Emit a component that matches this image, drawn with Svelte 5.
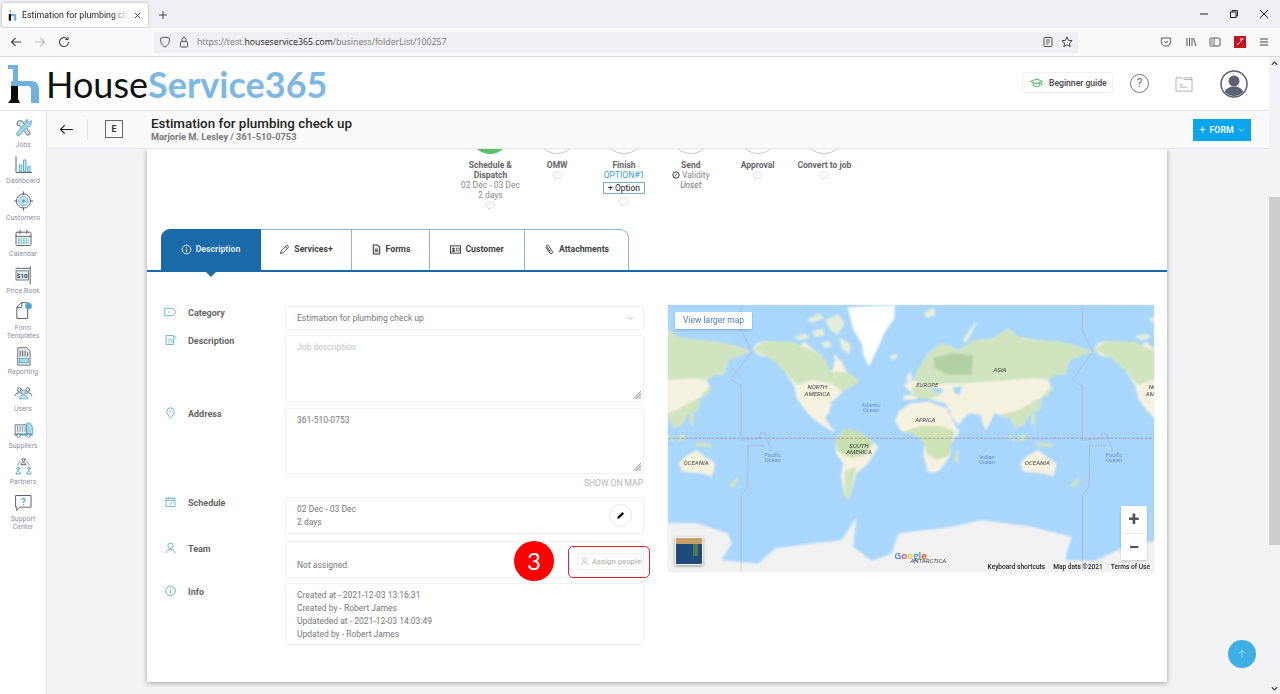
<script>
  const tl = '#4fa8c6';
  const gr = '#5b6470';
  const s = (c, w = 1.2) => `fill="none" stroke="${c}" stroke-width="${w}" stroke-linejoin="round" stroke-linecap="round"`;

  const nav = [
    { label: ['Jobs'], icon: `<path d="M4 6 8 3l3 1 9 15-3 2L7 9 5 9z" fill="#dfe3e6" stroke="${gr}" stroke-width="1.1"/><path d="M21 3l-3 3-2-1 1-3c-3 0-4 3-3 5L4 18c-1 2 1 4 3 3L17 10c2 1 5-1 4-7z" fill="#a8d8e6" stroke="${tl}" stroke-width="1.1"/>` },
    { label: ['Dashboard'], icon: `<path d="M3 2v19h19" ${s(gr)}/><path d="M7 12h3v8H7zM12 6h3v14h-3zM17 14h3v6h-3z" fill="#cfe9f2" stroke="${tl}" stroke-width="1.1"/>` },
    { label: ['Customers'], icon: `<circle cx="12" cy="12" r="8.5" ${s(gr)}/><circle cx="12" cy="12" r="5.5" fill="#cfe9f2" stroke="${tl}"/><circle cx="12" cy="12" r="2" fill="${tl}"/><path d="M12 1v3M12 20v3M1 12h3M20 12h3" ${s(gr)}/>` },
    { label: ['Calendar'], icon: `<rect x="3" y="5" width="18" height="16" rx="1.5" ${s(gr)}/><path d="M3 10h18M8 2.5v4M16 2.5v4" ${s(gr)}/><path d="M5.5 13h13M5.5 15.5h13M5.5 18h13" stroke="${tl}" stroke-width="1.6" stroke-dasharray="2 1"/>` },
    { label: ['Price Book'], icon: `<path d="M20 2v21M3 4h17" ${s(gr)}/><rect x="3" y="7" width="15" height="11" fill="#dff1f7" stroke="${gr}"/><text x="10.5" y="15.5" font-size="7.5" font-weight="700" text-anchor="middle" font-family="Roboto" fill="#333">$10</text>` },
    { label: ['Form', 'Templates'], icon: `<path d="M10 2h7v19H4V8z" ${s(gr)}/><path d="M10 2v6H4" ${s(gr)}/><circle cx="18" cy="6" r="4" fill="${tl}"/>` },
    { label: ['Reporting'], icon: `<path d="M5 2h11l4 4v17H5z" fill="#e7e8ea" stroke="${gr}"/><path d="M8 6v6M11 6v6M14 6v6M17 8v4" ${s(gr)}/><rect x="7" y="15" width="11" height="5" fill="#a8d8e6" stroke="${tl}"/>` },
    { label: ['Users'], icon: `<circle cx="7" cy="8" r="2.2" ${s(gr)}/><circle cx="17" cy="8" r="2.2" ${s(gr)}/><circle cx="12" cy="11" r="2.4" fill="#cfe9f2" stroke="${tl}"/><path d="M2 15c0-4 7-4 8-2M14 13c1-2 8-2 8 2" ${s(gr)}/><path d="M7 19c0-6 10-6 10 0z" fill="#cfe9f2" stroke="${tl}"/>` },
    { label: ['Suppliers'], icon: `<path d="M2 7h14v11H2z" fill="#e7f3f7" stroke="${gr}"/><path d="M5 9v6M8 9v6M11 9v6M14 9v6" ${s(gr, .8)}/><path d="M16 5h4l3 5v8h-7z" fill="#a8d8e6" stroke="${tl}"/><path d="M1 19h22" stroke="${tl}" stroke-width="2"/><circle cx="6" cy="20" r="2" fill="#fff" stroke="${gr}"/><circle cx="18" cy="20" r="2" fill="#fff" stroke="${gr}"/>` },
    { label: ['Partners'], icon: `<circle cx="12" cy="4.5" r="1.8" ${s(gr)}/><path d="M9 10c0-3 6-3 6 0z" ${s(gr)}/><path d="M5 11c1-3 2-3 3-4M19 11c-1-3-2-3-3-4" ${s(gr, .9)}/><circle cx="5.5" cy="15" r="1.6" ${s(tl)}/><path d="M3 21c0-4 5-4 5 0z" ${s(tl)}/><circle cx="18.5" cy="15" r="1.6" ${s(tl)}/><path d="M16 21c0-4 5-4 5 0z" ${s(tl)}/>` },
    { label: ['Support', 'Center'], icon: `<path d="M3 3h18v14H8l-4 4v-4H3z" ${s(gr)}/><text x="12" y="14.5" font-size="11" font-weight="700" text-anchor="middle" font-family="Roboto" fill="${tl}">?</text>` }
  ];

  const tabs = [
    { name: 'Description', width: 100, active: true, icon: `<circle cx="12" cy="12" r="9.5" fill="none" stroke="#fff" stroke-width="2"/><path d="M12 11v6M12 7v2" stroke="#fff" stroke-width="2.4"/>` },
    { name: 'Services+', width: 91, icon: `<path d="M3 21l2-6L16 4c2-2 6 2 4 4L9 19z" fill="none" stroke="#444" stroke-width="2"/><path d="M14 6l4 4" stroke="#444" stroke-width="2"/>` },
    { name: 'Forms', width: 78, icon: `<path d="M5 2h9l5 5v15H5z" fill="none" stroke="#333" stroke-width="2.2"/><path d="M8 11h8M8 14h8M8 17h8" stroke="#333" stroke-width="1.8"/>` },
    { name: 'Customer', width: 95, icon: `<rect x="1" y="4" width="22" height="16" fill="none" stroke="#333" stroke-width="2"/><circle cx="7.5" cy="10" r="2.6" fill="#333"/><path d="M3.5 17c0-5 8-5 8 0z" fill="#333"/><path d="M14 9h6v6h-6z" fill="none" stroke="#333" stroke-width="1.5"/>` },
    { name: 'Attachments', width: 104, icon: `<path d="M4 7l9 13c3 3 7 0 5-4L10 4C8 1 4 3 6 6l8 11" fill="none" stroke="#333" stroke-width="2"/>` }
  ];
</script>

<div class="app">
  <div class="tabstrip">
    <div class="tab">
      <svg class="favicon" viewBox="0 0 12 14"><path d="M1 0h3v5h5c2 0 2 2 2 3v6H8V8H4V5" fill="#6fb1df"/><path d="M1 5h3v9H1z" fill="#111"/></svg>
      <span class="tabtitle">Estimation for plumbing check up</span>
      <svg class="ic9" viewBox="0 0 10 10"><path d="M2 2l6 6M8 2l-6 6" stroke="#333" stroke-width="1"/></svg>
    </div>
    <svg class="newtab" viewBox="0 0 10 10"><path d="M5 1v8M1 5h8" stroke="#444" stroke-width="1"/></svg>
    <div class="wincontrols">
      <svg viewBox="0 0 10 10"><path d="M1 5h8" stroke="#222" stroke-width="1"/></svg>
      <svg viewBox="0 0 10 10"><path d="M1.5 3H7v5.500H1.500z M3 3V1.500h5.500V7H7" fill="none" stroke="#222" stroke-width="1"/></svg>
      <svg viewBox="0 0 10 10"><path d="M1 1l8 8M9 1l-8 8" stroke="#222" stroke-width="1"/></svg>
    </div>
  </div>

  <div class="toolbar">
    <div class="navbtns">
      <svg viewBox="0 0 12 12"><path d="M11 6H1.500M5.500 2 1.500 6l4 4" fill="none" stroke="#444" stroke-width="1.100"/></svg>
      <svg viewBox="0 0 12 12"><path d="M1 6h9.500M6.500 2l4 4-4 4" fill="none" stroke="#bbb" stroke-width="1.100"/></svg>
      <svg viewBox="0 0 12 12"><path d="M10.500 6A4.500 4.500 0 1 1 9 2.700M10 .8v2.700H7.300" fill="none" stroke="#444" stroke-width="1.100"/></svg>
    </div>
    <div class="urlbar">
      <svg viewBox="0 0 12 12"><path d="M6 1l4.500 1.300c0 4-1 7-4.500 8.700C2.500 9.300 1.500 6.300 1.500 2.300z" fill="none" stroke="#555" stroke-width="1"/></svg>
      <svg viewBox="0 0 12 12"><rect x="2.500" y="5.500" width="7" height="5.500" rx="1" fill="none" stroke="#555"/><path d="M4 5.500V3.500a2 2 0 0 1 4 0v2" fill="none" stroke="#555"/></svg>
      <span class="url">https://test.<b>houseservice365.com</b>/business/folderList/100257</span>
      <svg viewBox="0 0 12 12"><rect x="2" y="1.500" width="8" height="9" rx="1" fill="none" stroke="#555"/><path d="M4 4h4M4 6h4M4 8h2.500" stroke="#555" stroke-width=".9"/></svg>
      <svg viewBox="0 0 12 12"><path d="M6 1l1.500 3.300 3.600.4-2.700 2.400.8 3.500L6 8.800l-3.200 1.800.8-3.500L.9 4.700l3.600-.4z" fill="none" stroke="#444" stroke-width="1"/></svg>
    </div>
    <div class="extras">
      <svg viewBox="0 0 12 12"><path d="M1.500 2h9c.5 3 .5 8-4.500 8S1 5 1.500 2z" fill="none" stroke="#555"/><path d="M4 5l2 2 2-2" fill="none" stroke="#555"/></svg>
      <svg viewBox="0 0 12 12"><path d="M2 2v8M4.500 2v8M7 2v8M8.500 2l2.500 8" stroke="#555" stroke-width="1" fill="none"/></svg>
      <svg viewBox="0 0 12 12"><rect x="1" y="2" width="10" height="8" rx="1" fill="none" stroke="#555"/><path d="M5 2v8" stroke="#555"/><rect x="1.500" y="2.500" width="3.500" height="7" fill="#bbb"/></svg>
      <svg viewBox="0 0 12 12"><rect width="12" height="12" fill="#c8111b"/><path d="M3 9 9 3M6 3h3.500" stroke="#fff" stroke-width="1"/></svg>
      <svg viewBox="0 0 12 12"><path d="M2 3h8M2 6h8M2 9h8" stroke="#444" stroke-width="1"/></svg>
    </div>
  </div>

  <div class="page">
    <div class="page-main">
      <header class="topbar">
        <div class="logo">
          <svg class="logo-mark" viewBox="0 0 33 38"><path d="M1 0h10v16h13c6 0 8 4 8 9v13h-8V25c0-3-1-4-4-4H4v-5h2V4H1z" fill="#6fb1df"/><path d="M4 21h7v13l2 4H1l3-4z" fill="#0c0c0c"/></svg>
          <span class="logo-text">House<b>Service365</b></span>
        </div>
        <div class="top-actions">
          <div class="guide">
            <svg viewBox="0 0 16 12"><path d="M8 1 1 4l7 3 7-3zM4 6v3c2 2 6 2 8 0V6M14 4v5" fill="none" stroke="#5cb567" stroke-width="1.300"/></svg>
            Beginner guide
          </div>
          <div class="help">?</div>
          <svg class="folder" viewBox="0 0 20 18"><path d="M1 2h7l2 2h9v13H1z" fill="#fff" stroke="#a5a9ad"/><path d="M10 2h9v2M5 10h4M5 12.500h9" fill="none" stroke="#a5a9ad"/></svg>
          <svg class="avatar" viewBox="0 0 28 28"><circle cx="14" cy="14" r="13" fill="#fff" stroke="#5d6271" stroke-width="1.500"/><clipPath id="av"><circle cx="14" cy="14" r="12"/></clipPath><g clip-path="url(#av)" fill="#5d6271"><circle cx="14" cy="11" r="5.500"/><ellipse cx="14" cy="24" rx="10" ry="7.500"/></g></svg>
        </div>
      </header>

      <div class="body">
        <aside class="sidebar">
          {#each nav as item}
            <div class="nav-item">
              <svg class="nav-icon" viewBox="0 0 24 24">{@html item.icon}</svg>
              {#each item.label as line}<span>{line}</span>{/each}
            </div>
          {/each}
        </aside>

        <div class="main">
          <div class="subheader">
            <svg class="back" viewBox="0 0 16 12"><path d="M15 6H1.500M6 1.500 1.500 6 6 10.500" fill="none" stroke="#222" stroke-width="1.300"/></svg>
            <div class="divider"></div>
            <div class="ebox">E</div>
            <div class="titles">
              <h1>Estimation for plumbing check up</h1>
              <p>Marjorie M. Lesley / 361-510-0753</p>
            </div>
            <button class="form-btn"><span class="plus">+</span> FORM <svg viewBox="0 0 10 6"><path d="M1 1l4 4 4-4" fill="none" stroke="#fff"/></svg></button>
          </div>

          <div class="content">
            <section class="card">
              <div class="steps">
                <div class="step">
                  <div class="circle done"></div>
                  <b>Schedule &amp; Dispatch</b>
                  <span>02 Dec - 03 Dec</span>
                  <span>2 days</span>
                  {@render bubble()}
                </div>
                <div class="step">
                  <div class="circle"></div>
                  <b>OMW</b>
                  {@render bubble()}
                </div>
                <div class="step">
                  <div class="circle"></div>
                  <b>Finish</b>
                  <span class="option">OPTION#1</span>
                  <div class="add-option">+ Option</div>
                  {@render bubble()}
                </div>
                <div class="step">
                  <div class="circle"></div>
                  <b>Send</b>
                  <span><svg class="clock" viewBox="0 0 10 10"><circle cx="5" cy="5" r="4" fill="none" stroke="#333" stroke-width="1.200"/><path d="M5 5 3.500 7M5 5l1-2" stroke="#333"/></svg> Validity</span>
                  <i>Unset</i>
                </div>
                <div class="step">
                  <div class="circle"></div>
                  <b>Approval</b>
                  {@render bubble()}
                </div>
                <div class="step">
                  <div class="circle"></div>
                  <b>Convert to job</b>
                  {@render bubble()}
                </div>
              </div>

              <nav class="tabs">
                {#each tabs as t}
                  <div class="tab-item" class:active={t.active} style="width: {t.width}px">
                    <svg viewBox="0 0 24 24">{@html t.icon}</svg>
                    {t.name}
                  </div>
                {/each}
              </nav>

              <div class="panel">
                <div class="form">
                  <div class="label lb-2">
                    <svg viewBox="0 0 16 12"><path d="M1 1.500h10l4 4.500-4 4.500H1z" fill="none" stroke={tl}/><path d="M5 6h2" stroke={tl}/></svg>
                    Category
                  </div>
                  <div class="field select">
                    Estimation for plumbing check up
                    <svg viewBox="0 0 10 6"><path d="M1 1l4 4 4-4" fill="none" stroke="#888" stroke-width=".8"/></svg>
                  </div>

                  <div class="label lb-1">
                    <svg viewBox="0 0 16 16"><path d="M2 2h10v12H2z" fill="none" stroke={tl}/><path d="M4 7h5M4 9.500h4M4 12h3" stroke={tl} stroke-width=".8"/><path d="M9 9l5-6 1.500 1.500-5.500 6z" fill="#fff" stroke={tl} stroke-width=".9"/></svg>
                    Description
                  </div>
                  <div class="field area desc">
                    <span class="placeholder">Job description</span>
                    {@render grip()}
                  </div>

                  <div class="label lb-1">
                    <svg viewBox="0 0 16 16"><path d="M8 15C5 11 3 9 3 6a5 5 0 0 1 10 0c0 3-2 5-5 9z" fill="none" stroke={tl} stroke-width="1.100"/><circle cx="8" cy="6" r="1" fill={tl}/></svg>
                    Address
                  </div>
                  <div class="field area addr">
                    361-510-0753
                    {@render grip()}
                  </div>
                  <div></div>
                  <div class="show-map">SHOW ON MAP</div>

                  <div class="label lb-1">
                    <svg viewBox="0 0 16 16"><rect x="2" y="3" width="12" height="11" fill="none" stroke={tl}/><path d="M2 6h12M5 1.500v3M11 1.500v3" stroke={tl}/><path d="M6 10l1.500 1.500L10.500 8" fill="none" stroke={tl}/></svg>
                    Schedule
                  </div>
                  <div class="field sched">
                    <div>02 Dec - 03 Dec<br />2 days</div>
                    <div class="pencil"><svg viewBox="0 0 12 12"><path d="M1.500 10.500l.7-3L8.500 1.200l2.300 2.300-6.300 6.300z" fill="#111"/></svg></div>
                  </div>

                  <div class="label lb-3">
                    <svg viewBox="0 0 16 16"><circle cx="8" cy="5" r="3.500" fill="none" stroke={tl} stroke-width="1.100"/><path d="M2 15c0-7 12-7 12 0" fill="none" stroke={tl} stroke-width="1.100"/></svg>
                    Team
                  </div>
                  <div class="field team">
                    Not assigned.
                    <div class="marker">3</div>
                    <div class="highlight"></div>
                    <div class="assign">
                      <svg viewBox="0 0 12 12"><circle cx="6" cy="3.500" r="2.500" fill="none" stroke="#aaa" stroke-width=".9"/><path d="M1.500 11c0-5 9-5 9 0" fill="none" stroke="#aaa" stroke-width=".9"/></svg>
                      Assign people
                    </div>
                  </div>

                  <div class="label lb-4">
                    <svg viewBox="0 0 16 16"><circle cx="8" cy="8" r="6.500" fill="none" stroke={tl} stroke-width="1.100"/><path d="M8 7v4.500M8 4.500v1.200" stroke={tl} stroke-width="1.200"/></svg>
                    Info
                  </div>
                  <div class="field info">
                    Created at - 2021-12-03 13:16:31<br />
                    Created by - Robert James<br />
                    Updateded at - 2021-12-03 14:03:49<br />
                    Updated by - Robert James
                  </div>
                </div>

                <div class="map">
                  <svg class="world" viewBox="9 15 1458 801" preserveAspectRatio="none">
                    <defs>
                      <filter id="soft" x="-2%" y="-2%" width="104%" height="104%"><feGaussianBlur stdDeviation="2.500"/></filter>
                      <g id="land">
                        <!-- north america -->
                        <path fill="#f6f2e0" d="M262 150 275 130 300 122 345 130 385 125 400 140 420 125 440 145 470 165 478 200 500 215 510 180 505 160 530 185 545 215 585 245 560 245 545 262 520 290 500 305 492 340 480 352 500 385 512 392 505 395 470 375 440 352 420 330 395 295 388 260 360 215 335 185 310 170 285 168Z"/>
                        <path fill="#d0e5bf" d="M262 150 300 122 385 125 470 165 500 215 545 215 585 245 530 275 500 250 440 240 395 255 360 215 310 170Z"/>
                        <path fill="#e4eedb" d="M385 110 420 100 435 112 405 122ZM440 95 475 85 480 105 450 112ZM480 60 520 42 540 70 518 105 495 90ZM522 112 558 132 552 165 530 145ZM425 58 465 40 475 55 440 70ZM470 130 490 120 500 140 480 145Z"/>
                        <path fill="#fff" d="M548 22 690 15 688 55 660 95 640 140 612 200 595 165 590 130 565 90Z"/>
                        <path fill="#e6efdc" d="M672 168 695 162 697 175 680 180ZM725 225 738 215 745 250 725 258ZM775 40 805 22 812 42 790 55ZM890 125 928 68 935 72 905 125Z"/>
                        <!-- eurasia -->
                        <path fill="#f6f2e0" d="M712 300 720 285 745 285 730 270 715 255 750 240 760 205 790 160 830 130 860 140 880 150 930 120 985 115 1030 85 1060 110 1120 120 1180 125 1230 135 1283 155 1250 165 1215 180 1200 225 1180 195 1170 225 1150 240 1160 265 1130 295 1125 330 1095 340 1075 375 1050 385 1035 355 1015 350 990 340 962 392 945 345 915 340 905 345 880 375 860 350 840 310 800 300 770 290 745 300Z"/>
                        <path fill="#d0e5bf" d="M760 205 790 160 830 130 880 150 930 120 985 115 1030 85 1060 110 1120 120 1180 125 1230 135 1283 155 1215 180 1200 225 1170 225 1150 240 1110 235 1040 240 960 245 900 250 850 250 800 255 750 245Z"/>
                        <path fill="#b3d0a4" d="M805 175 860 160 925 165 920 225 850 225 810 205Z"/>
                        <path fill="#d0e5bf" d="M1000 345 1060 330 1130 290 1125 330 1095 340 1075 375 1050 385 1035 355ZM740 260 800 260 830 285 790 298 745 290Z"/>
                        <path fill="#a8d6fd" d="M865 262 890 258 885 285 868 280ZM838 305 850 325 860 340 852 335ZM800 262 835 268 830 280 805 275Z"/>
                        <!-- africa -->
                        <path fill="#f6f2e0" d="M690 365 700 335 735 310 790 305 845 325 875 385 885 392 855 435 858 465 820 515 790 518 775 465 778 430 755 405 710 395Z"/>
                        <path fill="#cde2b5" d="M715 395 760 380 830 378 870 395 855 435 855 465 815 480 785 460 778 430 755 405Z"/>
                        <!-- south america -->
                        <path fill="#f6f2e0" d="M510 425 540 385 590 398 640 440 610 490 575 520 552 600 538 590 528 530 535 490 515 465Z"/>
                        <path fill="#c8dfb0" d="M510 425 540 385 590 398 625 430 600 465 560 475 520 455Z"/>
                        <path fill="#d0e5bf" d="M540 510 575 500 552 600 538 590Z"/>
                        <!-- australia and islands -->
                        <path fill="#f6f2e0" d="M1065 490 1090 465 1120 450 1145 470 1175 490 1165 530 1130 520 1075 515Z"/>
                        <path fill="#d0e5bf" d="M872 455 882 450 880 485 868 490ZM1215 555 1240 530 1245 540 1225 565ZM1135 285 1160 255 1165 262 1145 295ZM1020 395 1055 420 1048 428ZM1060 410 1085 400 1080 422 1065 425ZM1110 425 1160 432 1165 442 1120 440ZM1100 335 1112 345 1108 385 1098 365Z"/>
                      </g>
                      <path id="dates" fill="none" stroke="#a39ac0" stroke-width="2" stroke-dasharray="5 3" d="M228 15V90L260 155 198 238 228 258V415M228 420 285 415 285 400 300 400 318 450M250 437H300M250 437 248 560 228 585V815"/>
                    </defs>
                    <rect x="9" y="15" width="1458" height="801" fill="#a8d6fd"/>
                    <g filter="url(#soft)">
                      <use href="#land" x="-1024"/>
                      <use href="#land"/>
                      <use href="#land" x="1024"/>
                      <path fill="#f2f2f2" d="M0 668 100 670 190 700 200 730 170 780 280 790 330 745 440 730 530 720 575 650 565 740 620 782 680 760 700 700 860 680 950 660 1100 680 1220 710 1200 780 1290 782 1380 740 1480 720V830H0Z"/>
                    </g>
                    <use href="#dates"/>
                    <use href="#dates" x="1024"/>
                    <path fill="none" stroke="#a9838f" stroke-width="2" stroke-dasharray="9 4" d="M9 415H1467"/>
                    <g class="labels">
                      <text x="457" y="267">NORTH</text><text x="457" y="287">AMERICA</text>
                      <text x="1481" y="267">NORTH</text><text x="1481" y="287">AMERICA</text>
                      <text x="582" y="443">SOUTH</text><text x="582" y="461">AMERICA</text>
                      <text x="787" y="261">EUROPE</text><text x="1005" y="217">ASIA</text>
                      <text x="781" y="365">AFRICA</text><text x="93" y="495">OCEANIA</text>
                      <text x="1117" y="495">OCEANIA</text><text x="790" y="789">ANTARCTICA</text>
                    </g>
                    <g class="oceans">
                      <text x="618" y="321">Atlantic</text><text x="618" y="337">Ocean</text>
                      <text x="323" y="471">Pacific</text><text x="323" y="487">Ocean</text>
                      <text x="1347" y="471">Pacific</text><text x="1347" y="487">Ocean</text>
                      <text x="966" y="477">Indian</text><text x="966" y="493">Ocean</text>
                    </g>
                    <text class="google" x="688" y="776"><tspan fill="#4285f4">G</tspan><tspan fill="#ea4335">o</tspan><tspan fill="#fbbc05">o</tspan><tspan fill="#4285f4">g</tspan><tspan fill="#34a853">l</tspan><tspan fill="#ea4335">e</tspan></text>
                  </svg>
                  <div class="larger">View larger map</div>
                  <div class="sat"></div>
                  <div class="zoomctl"><span>+</span><i></i><span>−</span></div>
                  <div class="attrib"><span>Keyboard shortcuts</span><span>Map data ©2021</span><span>Terms of Use</span></div>
                </div>
              </div>
            </section>
            <div class="to-top"><svg viewBox="0 0 10 10"><path d="M5 9V1.500M2 4.500l3-3 3 3" fill="none" stroke="#9fdcf5" stroke-width=".9"/></svg></div>
          </div>
        </div>
      </div>
    </div>

    <div class="scrollbar">
      <svg viewBox="0 0 10 6"><path d="M2 5l3-3 3 3" fill="none" stroke="#444" stroke-width="1.400"/></svg>
      <div class="thumb"></div>
      <svg class="down" viewBox="0 0 10 6"><path d="M2 1l3 3 3-3" fill="none" stroke="#444" stroke-width="1.400"/></svg>
    </div>
  </div>
</div>

{#snippet bubble()}
  <svg class="bubble" viewBox="0 0 12 10"><path d="M6 1c3 0 5 1.400 5 3.500S9 8 6 8L3.500 9.500 4 7.800C2.300 7.300 1 6 1 4.500 1 2.400 3 1 6 1z" fill="none" stroke="#d5d9dc"/><path d="M4 4.500h4" stroke="#d5d9dc" stroke-dasharray="1 1"/></svg>
{/snippet}

{#snippet grip()}
  <svg class="grip" viewBox="0 0 10 10"><path d="M1 9 9 1M4 9l5-5M7 9l2-2M2.500 9 9 2.500M5.500 9 9 5.500" stroke="#777" stroke-width=".6"/></svg>
{/snippet}

<style>
  :global(body) {
    margin: 0;
    overflow: hidden;
    font-family: Roboto, sans-serif;
  }
  .app {
    width: 1280px;
    height: 694px;
    display: flex;
    flex-direction: column;
    overflow: hidden;
    background: #fff;
  }

  .tabstrip {
    height: 28px;
    flex: none;
    background: #f0f0f4;
    display: flex;
    align-items: center;
    padding-left: 2px;
    box-sizing: border-box;
  }
  .tab {
    width: 146px;
    height: 24px;
    margin-top: 2px;
    box-sizing: border-box;
    background: #fff;
    border-radius: 3px;
    box-shadow: 0 0 3px rgba(0, 0, 0, 0.3);
    display: flex;
    align-items: center;
    padding: 0 6px;
    gap: 5px;
    font: 8.800px Roboto, sans-serif;
    color: #222;
  }
  .favicon { width: 9px; height: 11px; flex: none; }
  .tabtitle {
    flex: 1;
    white-space: nowrap;
    overflow: hidden;
    -webkit-mask-image: linear-gradient(to right, #000 85%, transparent);
    mask-image: linear-gradient(to right, #000 85%, transparent);
  }
  .ic9 { width: 9px; height: 9px; flex: none; }
  .newtab { width: 10px; height: 10px; margin-left: 10px; margin-top: 2px; }
  .wincontrols {
    margin-left: auto;
    display: flex;
    gap: 20px;
    padding-right: 11px;
  }
  .wincontrols svg { width: 10px; height: 10px; }

  .toolbar {
    height: 29px;
    flex: none;
    box-sizing: border-box;
    background: #f9f9fb;
    border-bottom: 1px solid #d6d6d8;
    display: flex;
    align-items: center;
  }
  .navbtns {
    display: flex;
    gap: 12px;
    padding-left: 10px;
    width: 154px;
    box-sizing: border-box;
  }
  .navbtns svg, .urlbar svg, .extras svg { width: 12px; height: 12px; flex: none; }
  .urlbar {
    width: 924px;
    height: 21px;
    background: #f0f0f4;
    display: flex;
    align-items: center;
    padding: 0 5px;
    box-sizing: border-box;
    gap: 7px;
  }
  .url {
    flex: 1;
    font: 8.750px "Open Sans", sans-serif;
    color: #777;
  }
  .url b { font-weight: 400; color: #222; }
  .extras {
    margin-left: auto;
    display: flex;
    gap: 12.500px;
    padding-right: 10px;
  }

  .page { flex: 1; display: flex; min-height: 0; }
  .page-main { flex: 1; display: flex; flex-direction: column; min-width: 0; }
  .topbar {
    height: 54px;
    flex: none;
    box-sizing: border-box;
    border-bottom: 1px solid #e3e3e5;
    display: flex;
    align-items: center;
    justify-content: space-between;
    padding-left: 7px;
  }
  .logo { display: flex; align-items: center; gap: 6px; margin-top: 1px; }
  .logo-mark { width: 33px; height: 38px; }
  .logo-text {
    font: 400 36px Lato, sans-serif;
    color: #111;
    line-height: 1;
  }
  .logo-text b { font-weight: 700; color: #7db8e4; }
  .top-actions { display: flex; align-items: center; }
  .guide {
    width: 91px;
    height: 21px;
    box-sizing: border-box;
    border: 1px solid #f0f0f0;
    border-radius: 3px;
    display: flex;
    align-items: center;
    gap: 6px;
    padding-left: 7px;
    font-size: 8.600px;
    font-weight: 500;
    color: #444;
    margin-top: -2px;
  }
  .guide svg { width: 13px; height: 10px; }
  .help {
    width: 17px;
    height: 17px;
    border: 1px solid #777;
    border-radius: 50%;
    margin-left: 17px;
    font-size: 12px;
    line-height: 17px;
    text-align: center;
    color: #777;
  }
  .folder { width: 18px; height: 16px; margin-left: 26px; }
  .avatar { width: 28px; height: 28px; margin: 0 21px 0 27px; }

  .body { flex: 1; display: flex; min-height: 0; }
  .sidebar {
    width: 47px;
    flex: none;
    box-sizing: border-box;
    border-right: 1px solid #e3e3e5;
    padding-top: 7px;
    background: #fff;
  }
  .nav-item {
    display: flex;
    flex-direction: column;
    align-items: center;
    margin-bottom: 6.170px;
    font-size: 7px;
    line-height: 8px;
    color: #8d92a8;
  }
  .nav-icon { width: 21px; height: 20px; margin-bottom: 2.500px; }

  .main { flex: 1; display: flex; flex-direction: column; min-width: 0; background: #f3f3f5; }
  .subheader {
    height: 38px;
    flex: none;
    box-sizing: border-box;
    background: #fafafa;
    border-bottom: 1px solid #e8e8e8;
    display: flex;
    align-items: center;
    padding-left: 12px;
    position: relative;
    z-index: 1;
  }
  .back { width: 15px; height: 11px; }
  .divider { width: 1px; height: 21px; background: #e2e2e2; margin-left: 13px; }
  .ebox {
    width: 18px;
    height: 18px;
    box-sizing: border-box;
    border: 1px solid #666;
    margin-left: 17px;
    font-size: 9px;
    font-weight: 700;
    line-height: 16px;
    text-align: center;
    color: #333;
    margin-top: -2px;
  }
  .titles { margin-left: 28px; }
  .titles h1 {
    margin: 0;
    font-size: 13.400px;
    font-weight: 500;
    line-height: 15px;
    color: #222;
  }
  .titles p {
    margin: 0;
    font-size: 9.250px;
    font-weight: 700;
    line-height: 12px;
    color: #777;
  }
  .form-btn {
    margin-left: auto;
    margin-right: 18px;
    width: 58px;
    height: 22px;
    padding: 0;
    border: 0;
    background: #0ba5ef;
    color: #e8f6fe;
    font: 700 8.800px Roboto, sans-serif;
    display: flex;
    align-items: center;
    justify-content: center;
    gap: 4px;
  }
  .plus { font-weight: 400; font-size: 11px; }
  .form-btn svg { width: 7px; height: 4px; }

  .content {
    flex: 1;
    min-height: 0;
    padding: 0 102px 12px 100px;
    position: relative;
    display: flex;
  }
  .card {
    flex: 1;
    background: #fff;
    box-shadow: 0 1px 5px rgba(0, 0, 0, 0.35);
    overflow: hidden;
    min-width: 0;
  }

  .steps {
    display: flex;
    padding-left: 310px;
    height: 79px;
  }
  .step {
    width: 66.800px;
    display: flex;
    flex-direction: column;
    align-items: center;
    text-align: center;
    font-size: 8.500px;
    line-height: 10px;
    color: #888;
  }
  .step b { font-size: 8.500px; color: #666; font-weight: 700; }
  .step i { color: #777; }
  .circle {
    width: 40px;
    height: 40px;
    flex: none;
    box-sizing: border-box;
    border-radius: 50%;
    border: 1.500px solid #c9c9c9;
    margin: -35px 0 6px;
  }
  .circle.done { background: #5cc166; border-color: #5cc166; }
  .option { color: #3a9bdc; }
  .add-option {
    width: 42px;
    height: 12px;
    box-sizing: border-box;
    border: 1px solid #79aec9;
    font-size: 8.500px;
    line-height: 10px;
    color: #222;
    margin: 2px 0 2px;
  }
  .clock { width: 8px; height: 8px; vertical-align: -1px; }
  .bubble { width: 11px; height: 9px; margin-top: 1px; flex: none; }

  .tabs {
    display: flex;
    margin: 1px 0 0 14px;
    height: 41px;
    position: relative;
  }
  .tabs::after {
    content: "";
    position: absolute;
    left: 0;
    bottom: -7px;
    width: 0;
    height: 0;
    margin-left: 45px;
    border: 5px solid transparent;
    border-top-color: #1a69a8;
    border-bottom: 0;
  }
  .tab-item {
    box-sizing: border-box;
    border: 1px solid #8fb6ca;
    border-left: 0;
    border-bottom: 0;
    display: flex;
    align-items: center;
    justify-content: center;
    gap: 4px;
    padding-bottom: 2px;
    font-size: 8.700px;
    font-weight: 700;
    color: #444;
    background: #fff;
  }
  .tab-item svg { width: 11px; height: 11px; }
  .tab-item:last-child { border-top-right-radius: 9px; }
  .tab-item.active {
    background: #1a69a8;
    border-color: #1a69a8;
    color: #dfeaf3;
    border-top-left-radius: 9px;
  }

  .panel {
    border-top: 2px solid #1a69a8;
    padding: 34px 13px 0 17px;
    display: flex;
    gap: 24px;
  }
  .form {
    width: 480px;
    flex: none;
    display: grid;
    grid-template-columns: 121px 359px;
    align-content: start;
  }
  .label {
    display: flex;
    align-items: flex-start;
    font-size: 9px;
    font-weight: 700;
    line-height: 10px;
    color: #666;
  }
  .label svg { width: 13px; height: 12px; margin-right: 11px; flex: none; margin-top: -2px; }
  .lb-1 { padding-top: 1px; }
  .lb-2 { padding-top: 2px; }
  .lb-3 { padding-top: 3px; }
  .lb-4 { padding-top: 4px; }
  .field {
    box-sizing: border-box;
    border: 1px solid #f0f0f0;
    border-radius: 3px;
    padding-left: 11px;
    font-size: 8.500px;
    color: #777;
    position: relative;
  }
  .select {
    height: 24px;
    margin-bottom: 5px;
    display: flex;
    align-items: center;
    justify-content: space-between;
    padding-right: 9px;
  }
  .select svg { width: 7px; height: 4px; }
  .area { padding-top: 6px; line-height: 10px; }
  .desc { height: 67px; margin-bottom: 6px; }
  .addr { height: 66px; }
  .placeholder { color: #c4c4c4; }
  .grip { position: absolute; right: 1px; bottom: 1px; width: 10px; height: 10px; }
  .show-map {
    height: 23px;
    line-height: 18px;
    text-align: right;
    font-size: 8.500px;
    color: #b5b5b5;
    padding-right: 1px;
  }
  .sched {
    height: 37px;
    margin-bottom: 7px;
    display: flex;
    align-items: center;
    justify-content: space-between;
    padding-right: 11px;
    line-height: 13px;
  }
  .pencil {
    width: 23px;
    height: 23px;
    box-sizing: border-box;
    border: 1px solid #e6e6e6;
    border-radius: 50%;
    display: flex;
    align-items: center;
    justify-content: center;
  }
  .pencil svg { width: 9px; height: 9px; }
  .team {
    height: 37px;
    margin-bottom: 5px;
    padding-top: 18px;
    line-height: 11px;
  }
  .marker {
    position: absolute;
    left: 228px;
    top: -1px;
    width: 40px;
    height: 40px;
    border-radius: 50%;
    background: #f00;
    color: #fff;
    font: 400 24px/40px Lato, sans-serif;
    text-align: center;
  }
  .highlight {
    position: absolute;
    left: 282px;
    top: 4px;
    width: 82px;
    height: 32px;
    box-sizing: border-box;
    border: 1px solid #e8202a;
    border-radius: 5px;
  }
  .assign {
    position: absolute;
    left: 291px;
    top: 11px;
    width: 65px;
    height: 17px;
    box-sizing: border-box;
    border: 1px solid #efefef;
    display: flex;
    align-items: center;
    gap: 3px;
    padding-left: 2px;
    font-size: 7.800px;
    color: #aaa;
    white-space: nowrap;
  }
  .assign svg { width: 9px; height: 9px; flex: none; }
  .info { height: 62px; padding-top: 5px; line-height: 12.900px; }

  .map {
    width: 486px;
    height: 267px;
    margin-top: -1px;
    position: relative;
    flex: none;
    overflow: hidden;
    box-shadow: 0 0 1px #ccc;
  }
  .world { display: block; width: 100%; height: 100%; }
  .labels text {
    font: italic 400 18.500px Roboto, sans-serif;
    fill: #444;
    text-anchor: middle;
  }
  .oceans text {
    font: 400 17px Roboto, sans-serif;
    fill: #6a8ec8;
    text-anchor: middle;
  }
  .google { font: 600 29px "Open Sans", sans-serif; }
  .larger {
    position: absolute;
    left: 7px;
    top: 7px;
    width: 77px;
    height: 17px;
    background: #fff;
    font-size: 8.500px;
    line-height: 17px;
    text-align: center;
    color: #4a7fc4;
    box-shadow: 0 1px 2px rgba(0, 0, 0, 0.2);
  }
  .sat {
    position: absolute;
    left: 7px;
    bottom: 7px;
    width: 26px;
    height: 26px;
    border: 1px solid #fff;
    background:
      linear-gradient(to right, transparent 65%, #4d7a4a 65% 85%, #1f4a7c 85%) 0 6px / 100% 12px no-repeat,
      linear-gradient(#c99f6a 0 24%, #1f4a7c 24% 100%);
    box-shadow: 0 1px 3px rgba(0, 0, 0, 0.4);
  }
  .zoomctl {
    position: absolute;
    right: 7px;
    bottom: 12px;
    width: 26px;
    height: 54px;
    background: #fff;
    box-shadow: 0 1px 2px rgba(0, 0, 0, 0.2);
    display: flex;
    flex-direction: column;
    align-items: center;
    color: #555;
    font: 700 20px/26px Roboto, sans-serif;
  }
  .zoomctl span { height: 26.500px; }
  .zoomctl i { width: 20px; height: 1px; background: #e6e6e6; flex: none; }
  .attrib {
    position: absolute;
    right: 0;
    bottom: 0;
    height: 9px;
    padding: 0 4px 0 0;
    display: flex;
    gap: 8px;
    font-size: 6.600px;
    font-weight: 500;
    line-height: 9px;
    color: #222;
    white-space: nowrap;
  }

  .to-top {
    position: absolute;
    right: 13px;
    bottom: 26px;
    width: 28px;
    height: 28px;
    border-radius: 50%;
    background: #3eaee3;
    display: flex;
    align-items: center;
    justify-content: center;
  }
  .to-top svg { width: 10px; height: 10px; }

  .scrollbar {
    width: 11px;
    flex: none;
    background: #f3f3f5;
    position: relative;
  }
  .scrollbar svg { display: block; width: 9px; height: 6px; margin: 3px 1px 0; }
  .scrollbar .down { position: absolute; bottom: 2px; left: 0; }
  .thumb {
    position: absolute;
    left: 0;
    top: 140px;
    width: 100%;
    height: 348px;
    background: #cdcdcd;
  }
</style>
